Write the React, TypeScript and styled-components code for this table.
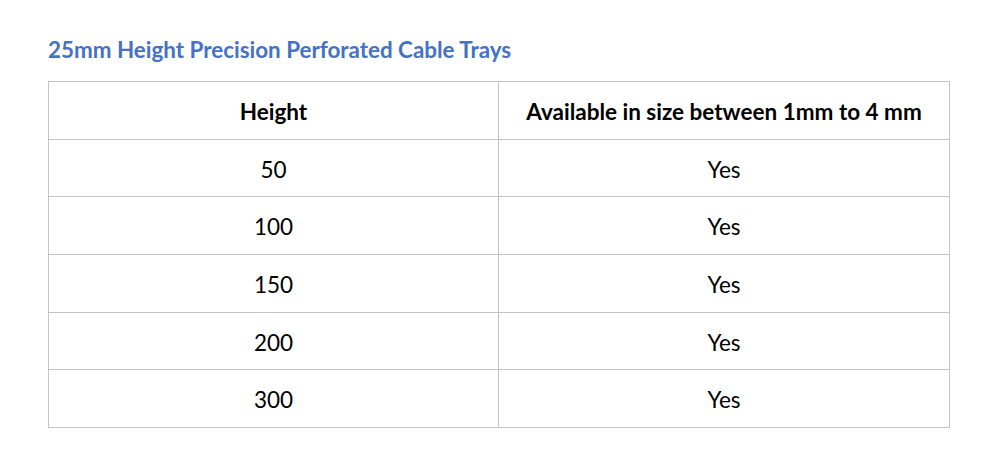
import React from "react";
import styled, { createGlobalStyle } from "styled-components";

const Global = createGlobalStyle`
  html, body { margin: 0; padding: 0; background: #ffffff; }
  body { font-family: Lato, "Open Sans", "Liberation Sans", sans-serif; }
`;

const Page = styled.div`
  width: 1008px;
  height: 467px;
  box-sizing: border-box;
  padding: 38px 58px 0 48px;
  display: flex;
  flex-direction: column;
`;

const Title = styled.h2`
  margin: 0 0 19px 0;
  font-size: 22.4px;
  line-height: 24px;
  font-weight: 700;
  color: #4472c4;
`;

const Table = styled.table`
  width: 902px;
  border-collapse: collapse;
  table-layout: fixed;
`;

const Cell = styled.td<{ $head?: boolean; $w?: number }>`
  border: 1px solid #c4c4c4;
  height: 54.7px;
  padding: 2px 0 0 0;
  text-align: center;
  vertical-align: middle;
  font-size: 22.5px;
  font-weight: ${(p) => (p.$head ? 700 : 400)};
  color: #000;
  ${(p) => (p.$w ? `width: ${p.$w}px;` : "")}
`;

const rows = ["50", "100", "150", "200", "300"];

export default function App() {
  return (
    <>
      <Global />
      <Page>
        <Title>25mm Height Precision Perforated Cable Trays</Title>
        <Table>
          <tbody>
            <tr>
              <Cell as="th" $head $w={449}>Height</Cell>
              <Cell as="th" $head>Available in size between 1mm to 4 mm</Cell>
            </tr>
            {rows.map((r) => (
              <tr key={r}>
                <Cell>{r}</Cell>
                <Cell>Yes</Cell>
              </tr>
            ))}
          </tbody>
        </Table>
      </Page>
    </>
  );
}
